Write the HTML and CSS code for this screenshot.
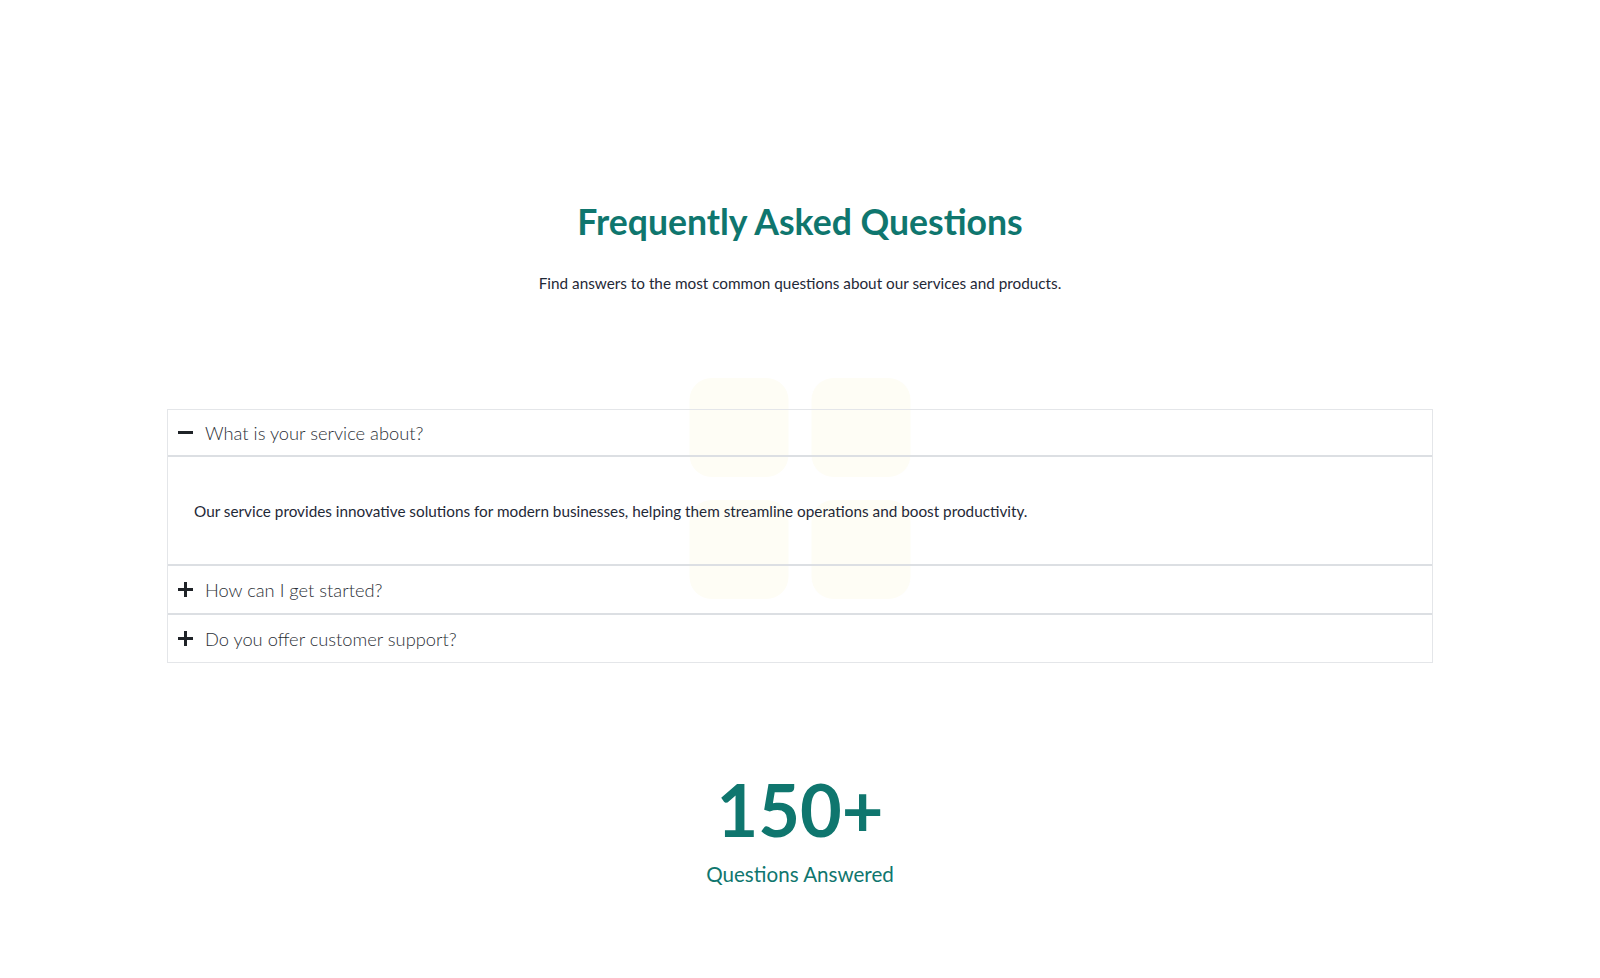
FILE: index.html
```html
<!DOCTYPE html>
<html lang="en">
<head>
<meta charset="utf-8">
<title>FAQ</title>
<link rel="stylesheet" href="styles.css">
</head>
<body>
<main class="page">
  <section class="faq-head">
    <h1 class="title">Frequently Asked Questions</h1>
    <p class="subtitle">Find answers to the most common questions about our services and products.</p>
  </section>

  <section class="faq-wrap">
    <div class="deco" aria-hidden="true">
      <span class="tile"></span><span class="tile"></span>
      <span class="tile"></span><span class="tile"></span>
    </div>
    <div class="accordion">
      <div class="item open">
        <div class="q">
          <svg class="ic" width="15" height="15" viewBox="0 0 15 15"><rect x="0" y="6" width="15" height="3" fill="#1f2328"/></svg>
          <span>What is your service about?</span>
        </div>
        <div class="a">Our service provides innovative solutions for modern businesses, helping them streamline operations and boost productivity.</div>
      </div>
      <div class="item">
        <div class="q">
          <svg class="ic" width="15" height="15" viewBox="0 0 15 15"><rect x="0" y="6" width="15" height="3" fill="#1f2328"/><rect x="6" y="0" width="3" height="15" fill="#1f2328"/></svg>
          <span>How can I get started?</span>
        </div>
      </div>
      <div class="item">
        <div class="q">
          <svg class="ic" width="15" height="15" viewBox="0 0 15 15"><rect x="0" y="6" width="15" height="3" fill="#1f2328"/><rect x="6" y="0" width="3" height="15" fill="#1f2328"/></svg>
          <span>Do you offer customer support?</span>
        </div>
      </div>
    </div>
  </section>

  <section class="stat">
    <div class="num">150+</div>
    <div class="label">Questions Answered</div>
  </section>
</main>
</body>
</html>
```

FILE: styles.css
```css
* { box-sizing: border-box; }
html, body { margin: 0; padding: 0; background: #ffffff; }
body {
  font-family: "Lato", "Open Sans", sans-serif;
  color: #1f2937;
}
.page {
  padding: 200px 167px 0;
}
.faq-head {
  text-align: center;
}
.title {
  margin: 0;
  font-size: 35.6px;
  line-height: 44px;
  font-weight: 700;
  color: #0f766e;
}
.subtitle {
  margin: 28px 0 0;
  font-size: 15.3px;
  line-height: 22px;
  color: #1f2937;
}
.faq-wrap {
  position: relative;
  margin-top: 115px;
}
.deco {
  position: absolute;
  left: 50%;
  top: -31px;
  transform: translateX(-50%);
  display: grid;
  grid-template-columns: 99px 99px;
  grid-auto-rows: 99px;
  gap: 23px;
  z-index: 0;
}
.tile {
  display: block;
  background: #fefdf5;
  border-radius: 22px;
}
.accordion {
  position: relative;
  z-index: 1;
  border: 1px solid #e4e6e9;
}
.item + .item {
  border-top: 2px solid #dcdfe3;
}
.q {
  display: flex;
  align-items: center;
  gap: 12px;
  height: 47px;
  padding: 0 10px;
  font-size: 18.3px;
  font-weight: 300;
  color: #2b2f36;
}
.ic { flex: none; }
.open .q {
  border-bottom: 2px solid #dcdfe3;
}
.a {
  padding: 42px 26px 41px;
  font-size: 15.3px;
  line-height: 24px;
  color: #1f2937;
}
.stat {
  text-align: center;
  margin-top: 106px;
  color: #0f766e;
}
.num {
  font-size: 72px;
  line-height: 80px;
  font-weight: 700;
}
.label {
  margin-top: 11px;
  font-size: 20.6px;
  line-height: 28px;
}
```
